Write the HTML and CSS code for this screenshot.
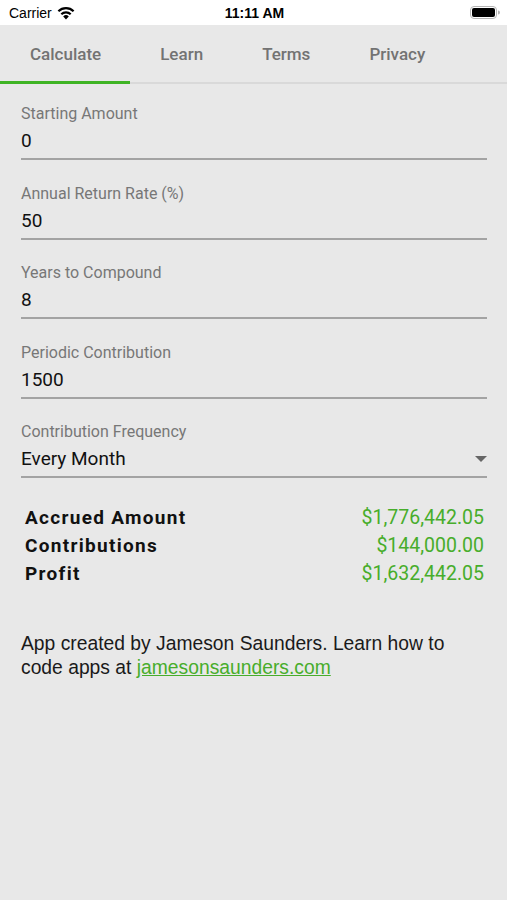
FILE: index.html
```html
<!DOCTYPE html>
<html lang="en">
<head>
    <meta charset="UTF-8">
    <title>Compound Interest Calculator</title>
    <link rel="stylesheet" href="styles.css">
</head>
<body>
    <div class="status-bar">
        <div class="carrier">
            Carrier
            <svg class="wifi" width="18" height="14" viewBox="0 0 18 14">
                <path d="M9 13.5 L6.2 10.4 A4 4 0 0 1 11.8 10.4 Z" fill="#000"/>
                <path d="M4.3 8.3 A6.8 6.8 0 0 1 13.7 8.3" stroke="#000" stroke-width="2.2" fill="none"/>
                <path d="M1.4 5.3 A10.8 10.8 0 0 1 16.6 5.3" stroke="#000" stroke-width="2.2" fill="none"/>
            </svg>
        </div>
        <div class="time">11:11 AM</div>
        <div class="battery">
            <svg width="30" height="13" viewBox="0 0 30 13">
                <rect x="0.5" y="0.5" width="26" height="12" rx="3.5" fill="none" stroke="#b5b5b5"/>
                <rect x="2" y="2" width="23" height="9" rx="2" fill="#000"/>
                <path d="M28 4.5 A2 2 0 0 1 28 8.5 Z" fill="#b5b5b5"/>
            </svg>
        </div>
    </div>

    <nav class="tabs">
        <div class="tab active">Calculate</div>
        <div class="tab">Learn</div>
        <div class="tab">Terms</div>
        <div class="tab">Privacy</div>
    </nav>

    <div class="form">
        <div class="field">
            <div class="field-label">Starting Amount</div>
            <div class="field-value">0</div>
        </div>
        <div class="field">
            <div class="field-label">Annual Return Rate (%)</div>
            <div class="field-value">50</div>
        </div>
        <div class="field">
            <div class="field-label">Years to Compound</div>
            <div class="field-value">8</div>
        </div>
        <div class="field">
            <div class="field-label">Periodic Contribution</div>
            <div class="field-value">1500</div>
        </div>
        <div class="field">
            <div class="field-label">Contribution Frequency</div>
            <div class="field-value select">
                <span>Every Month</span>
                <span class="caret"></span>
            </div>
        </div>
    </div>

    <!-- Results -->
    <div class="results">
        <div class="row"><span class="name">Accrued Amount</span><span class="amount">$1,776,442.05</span></div>
        <div class="row"><span class="name">Contributions</span><span class="amount">$144,000.00</span></div>
        <div class="row"><span class="name">Profit</span><span class="amount">$1,632,442.05</span></div>
    </div>

    <p class="credit">
        App created by Jameson Saunders. Learn how to code apps at <a href="#">jamesonsaunders.com</a>
    </p>
</body>
</html>
```

FILE: styles.css
```css
body {
    margin: 0;
    background: #e8e8e8;
    font-family: Roboto, "Liberation Sans", sans-serif;
    height: 900px;
}
.status-bar {
    background: #fff;
    height: 25px;
    display: flex;
    align-items: center;
    justify-content: space-between;
    padding: 0 7px 0 9px;
    font-family: "Liberation Sans", Arial, sans-serif;
    font-size: 14px;
    color: #000;
}
.carrier {
    display: flex;
    align-items: center;
    gap: 5px;
    width: 120px;
}
.time {
    font-weight: bold;
    font-size: 14px;
}
.battery {
    width: 120px;
    display: flex;
    justify-content: flex-end;
}
.tabs {
    display: flex;
    border-bottom: 2px solid #d9d9d9;
    height: 57px;
}
.tab {
    padding: 0 29px 0 30px;
    font-size: 17px;
    font-weight: 500;
    color: #737373;
    line-height: 58px;
    height: 56px;
    border-bottom: 3px solid transparent;
    margin-bottom: -2px;
}
.tab.active {
    border-bottom-color: #3fb424;
}
.form {
    padding: 20px 20px 0 21px;
}
.field {
    margin-bottom: 23.5px;
    border-bottom: 2px solid #a3a3a3;
}
.field-label {
    font-size: 16px;
    line-height: 20px;
    color: #777;
}
.field-value {
    font-size: 19px;
    line-height: 26px;
    color: #111;
    margin: 4px 0 4px;
}
.select {
    display: flex;
    justify-content: space-between;
    align-items: center;
}
.caret {
    width: 0;
    height: 0;
    border-left: 6px solid transparent;
    border-right: 6px solid transparent;
    border-top: 6px solid #666;
}
.results {
    padding: 2.5px 23px 0 25px;
}
.row {
    display: flex;
    justify-content: space-between;
    line-height: 28px;
    font-size: 19px;
}
.name {
    font-weight: bold;
    letter-spacing: 1.3px;
    color: #111;
}
.amount {
    font-size: 19.5px;
    color: #47ad2b;
}
.credit {
    margin: 44px 50px 0 21px;
    font-family: "Liberation Sans", Arial, sans-serif;
    font-size: 19.3px;
    line-height: 23.5px;
    color: #1a1a1a;
}
.credit a {
    color: #47ad2b;
}
```
